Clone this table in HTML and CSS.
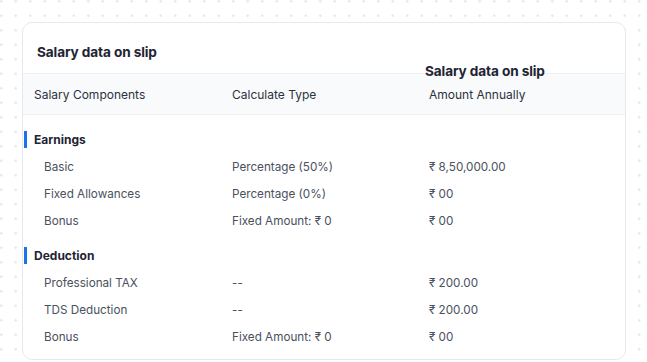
FILE: index.html
```html
<!DOCTYPE html>
<html>
<head>
<meta charset="utf-8">
<link rel="stylesheet" href="styles.css">
</head>
<body>
<div class="card">
  <div class="title">Salary data on slip</div>
  <div class="float-title">Salary data on slip</div>
  <div class="row head">
    <div>Salary Components</div>
    <div>Calculate Type</div>
    <div>Amount Annually</div>
  </div>
  <div class="group first">
    <div class="group-label">Earnings</div>
    <div class="row item"><div>Basic</div><div>Percentage (50%)</div><div>₹ 8,50,000.00</div></div>
    <div class="row item"><div>Fixed Allowances</div><div>Percentage (0%)</div><div>₹ 00</div></div>
    <div class="row item"><div>Bonus</div><div>Fixed Amount: ₹ 0</div><div>₹ 00</div></div>
  </div>
  <div class="group">
    <div class="group-label">Deduction</div>
    <div class="row item"><div>Professional TAX</div><div>--</div><div>₹ 200.00</div></div>
    <div class="row item"><div>TDS Deduction</div><div>--</div><div>₹ 200.00</div></div>
    <div class="row item"><div>Bonus</div><div>Fixed Amount: ₹ 0</div><div>₹ 00</div></div>
  </div>
</div>
</body>
</html>
```
FILE: styles.css
```css
html, body {
  margin: 0;
  padding: 0;
}
body {
  width: 647px;
  height: 362px;
  overflow: hidden;
  font-family: Inter, "Noto Sans", sans-serif;
  background-color: #ffffff;
  background-image: radial-gradient(circle, #e3e6ea 1.1px, transparent 1.4px);
  background-size: 14.5px 14.5px;
  background-position: -6px -6px;
  padding-top: 22px;
  padding-left: 22px;
  box-sizing: border-box;
}
.card {
  position: relative;
  width: 604px;
  height: 338px;
  box-sizing: border-box;
  background: #ffffff;
  border: 1px solid #e6e9ef;
  border-radius: 10px;
  overflow: hidden;
}
.title, .float-title {
  font-size: 13.6px;
  font-weight: 700;
  color: #1e2433;
  line-height: 20px;
  letter-spacing: -0.1px;
}
.title {
  padding: 19px 0 11px 14px;
}
.float-title {
  position: absolute;
  left: 402px;
  top: 38px;
}
.row {
  display: grid;
  grid-template-columns: 198px 197px 1fr;
  align-items: center;
}
.head {
  height: 42px;
  box-sizing: border-box;
  background: #f8fafc;
  border-top: 1px solid #edf0f4;
  border-bottom: 1px solid #edf0f4;
  padding-left: 11px;
  font-size: 12px;
  color: #2c3240;
}
.group {
  padding-top: 8px;
}
.group.first {
  padding-top: 11px;
}
.group-label {
  height: 27px;
  display: flex;
  align-items: center;
  position: relative;
  padding-left: 11px;
  font-size: 12px;
  font-weight: 700;
  color: #1e2433;
  box-sizing: border-box;
}
.group-label::before {
  content: "";
  position: absolute;
  left: 1px;
  top: 5px;
  width: 3px;
  height: 17px;
  background: #1a73e8;
}
.item {
  height: 27px;
  padding-left: 21px;
  font-size: 11.7px;
  color: #4a5160;
  grid-template-columns: 188px 197px 1fr;
}
```
